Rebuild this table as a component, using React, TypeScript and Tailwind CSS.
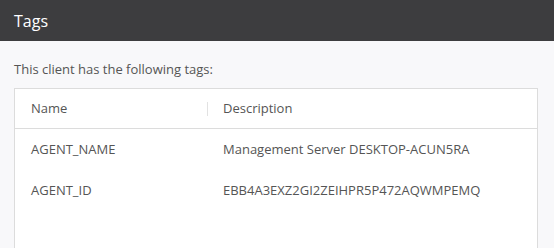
const tags = [
  { name: "AGENT_NAME", description: "Management Server DESKTOP-ACUN5RA" },
  { name: "AGENT_ID", description: "EBB4A3EXZ2GI2ZEIHPR5P472AQWMPEMQ" },
];

export default function App() {
  return (
    <div className="w-[554px] h-[248px] overflow-hidden bg-[#f8f8fa] font-['Open_Sans',sans-serif]">
      <header className="h-[41px] bg-[#3d3d3f] px-[14px] flex items-center">
        <h1 className="text-[16px] text-white">Tags</h1>
      </header>

      <div className="pl-[14px] pr-[16px] pt-[18px]">
        <p className="text-[13px] leading-[20px] text-[#555]">This client has the following tags:</p>

        <div className="mt-[9px] h-[200px] border border-[#dcdcdc] bg-white">
          <div className="h-[40px] flex items-center border-b border-[#dcdcdc] text-[13px] font-medium text-[#555]">
            <div className="w-[192px] pl-[16px]">Name</div>
            <div className="h-[14px] w-px bg-[#e2e2e2]" />
            <div className="pl-[15px]">Description</div>
          </div>
          {tags.map((t) => (
            <div key={t.name} className="h-[41px] flex items-center text-[13px] text-[#555]">
              <div className="w-[193px] pl-[16px]">{t.name}</div>
              <div className="pl-[15px]">{t.description}</div>
            </div>
          ))}
        </div>
      </div>
    </div>
  );
}
